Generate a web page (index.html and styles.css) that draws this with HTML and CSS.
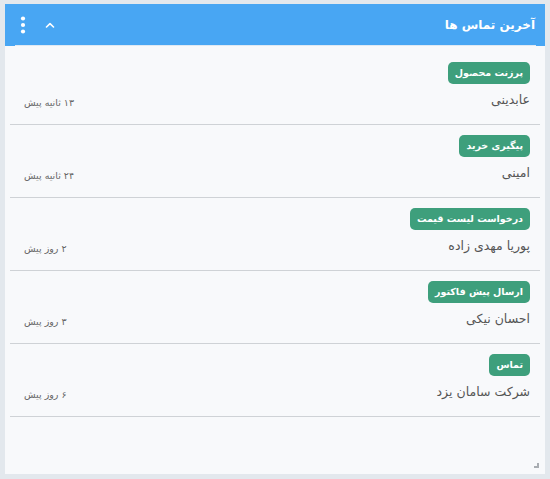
FILE: index.html
```html
<!DOCTYPE html>
<html lang="fa" dir="rtl">
<head>
<meta charset="utf-8">
<title>آخرین تماس ها</title>
<link rel="stylesheet" href="styles.css">
</head>
<body>
<div class="card">
  <div class="header">
    <div class="header-bar">
      <span class="title">آخرین تماس ها</span>
      <div class="tools">
        <svg class="chev" width="10" height="6" viewBox="0 0 10 6"><path d="M1.5 5 L5 1.6 L8.5 5" fill="none" stroke="#fff" stroke-width="1.6" stroke-linecap="round" stroke-linejoin="round"/></svg>
        <svg class="dots" width="6" height="18" viewBox="0 0 6 18"><circle cx="3" cy="2.5" r="2.1" fill="#fff"/><circle cx="3" cy="9" r="2.1" fill="#fff"/><circle cx="3" cy="15.5" r="2.1" fill="#fff"/></svg>
      </div>
    </div>
  </div>
  <div class="list">
    <div class="row">
      <div class="main"><span class="badge">پرزنت محصول</span><span class="name">عابدینی</span></div>
      <span class="time">۱۳ ثانیه پیش</span>
    </div>
    <div class="row">
      <div class="main"><span class="badge">پیگیری خرید</span><span class="name">امینی</span></div>
      <span class="time">۲۴ ثانیه پیش</span>
    </div>
    <div class="row">
      <div class="main"><span class="badge">درخواست لیست قیمت</span><span class="name">پوریا مهدی زاده</span></div>
      <span class="time">۲ روز پیش</span>
    </div>
    <div class="row">
      <div class="main"><span class="badge">ارسال پیش فاکتور</span><span class="name">احسان نیکی</span></div>
      <span class="time">۳ روز پیش</span>
    </div>
    <div class="row">
      <div class="main"><span class="badge">تماس</span><span class="name">شرکت سامان یزد</span></div>
      <span class="time">۶ روز پیش</span>
    </div>
  </div>
  <div class="footer"><span class="grip"></span></div>
</div>
</body>
</html>
```
FILE: styles.css
```css
html, body {
  margin: 0;
  height: 100%;
}
body {
  background: #e3e8ed;
  padding: 4px 5px 5px;
  box-sizing: border-box;
  font-family: "DejaVu Sans", sans-serif;
}
.card {
  height: 100%;
  background: #f8f9fb;
  display: flex;
  flex-direction: column;
}
.header {
  background: #48a6f3;
  padding: 0 9px 0 10px;
}
.header-bar {
  height: 41px;
  border-bottom: 1px solid #dfe9f3;
  display: flex;
  align-items: center;
  justify-content: space-between;
}
.title {
  color: #fff;
  font-weight: bold;
  font-size: 12px;
  padding-right: 1px;
}
.tools {
  display: flex;
  align-items: center;
  gap: 19px;
  padding-left: 5px;
}
.chev { display: block; }
.dots { display: block; }
.list {
  flex: 1;
  padding: 6px 5px 0;
}
.row {
  display: flex;
  justify-content: space-between;
  align-items: flex-end;
  padding: 10px 10px 14px 14px;
  border-bottom: 1px solid #cfd2d6;
}
.main {
  display: flex;
  flex-direction: column;
  align-items: flex-start;
}
.badge {
  background: #3e9f7c;
  color: #fff;
  font-weight: bold;
  font-size: 9.5px;
  height: 22px;
  line-height: 22px;
  padding: 0 7px;
  border-radius: 5px;
}
.name {
  margin-top: 6px;
  line-height: 20px;
  font-size: 12.5px;
  color: #555;
}
.time {
  font-size: 9.5px;
  line-height: 14px;
  color: #666;
}
.footer {
  display: flex;
  justify-content: flex-end;
  direction: ltr;
  padding: 0 6px 6px 0;
}
.grip {
  width: 5px;
  height: 5px;
  border-right: 2px solid #a9adb2;
  border-bottom: 2px solid #a9adb2;
  box-sizing: border-box;
}
```
